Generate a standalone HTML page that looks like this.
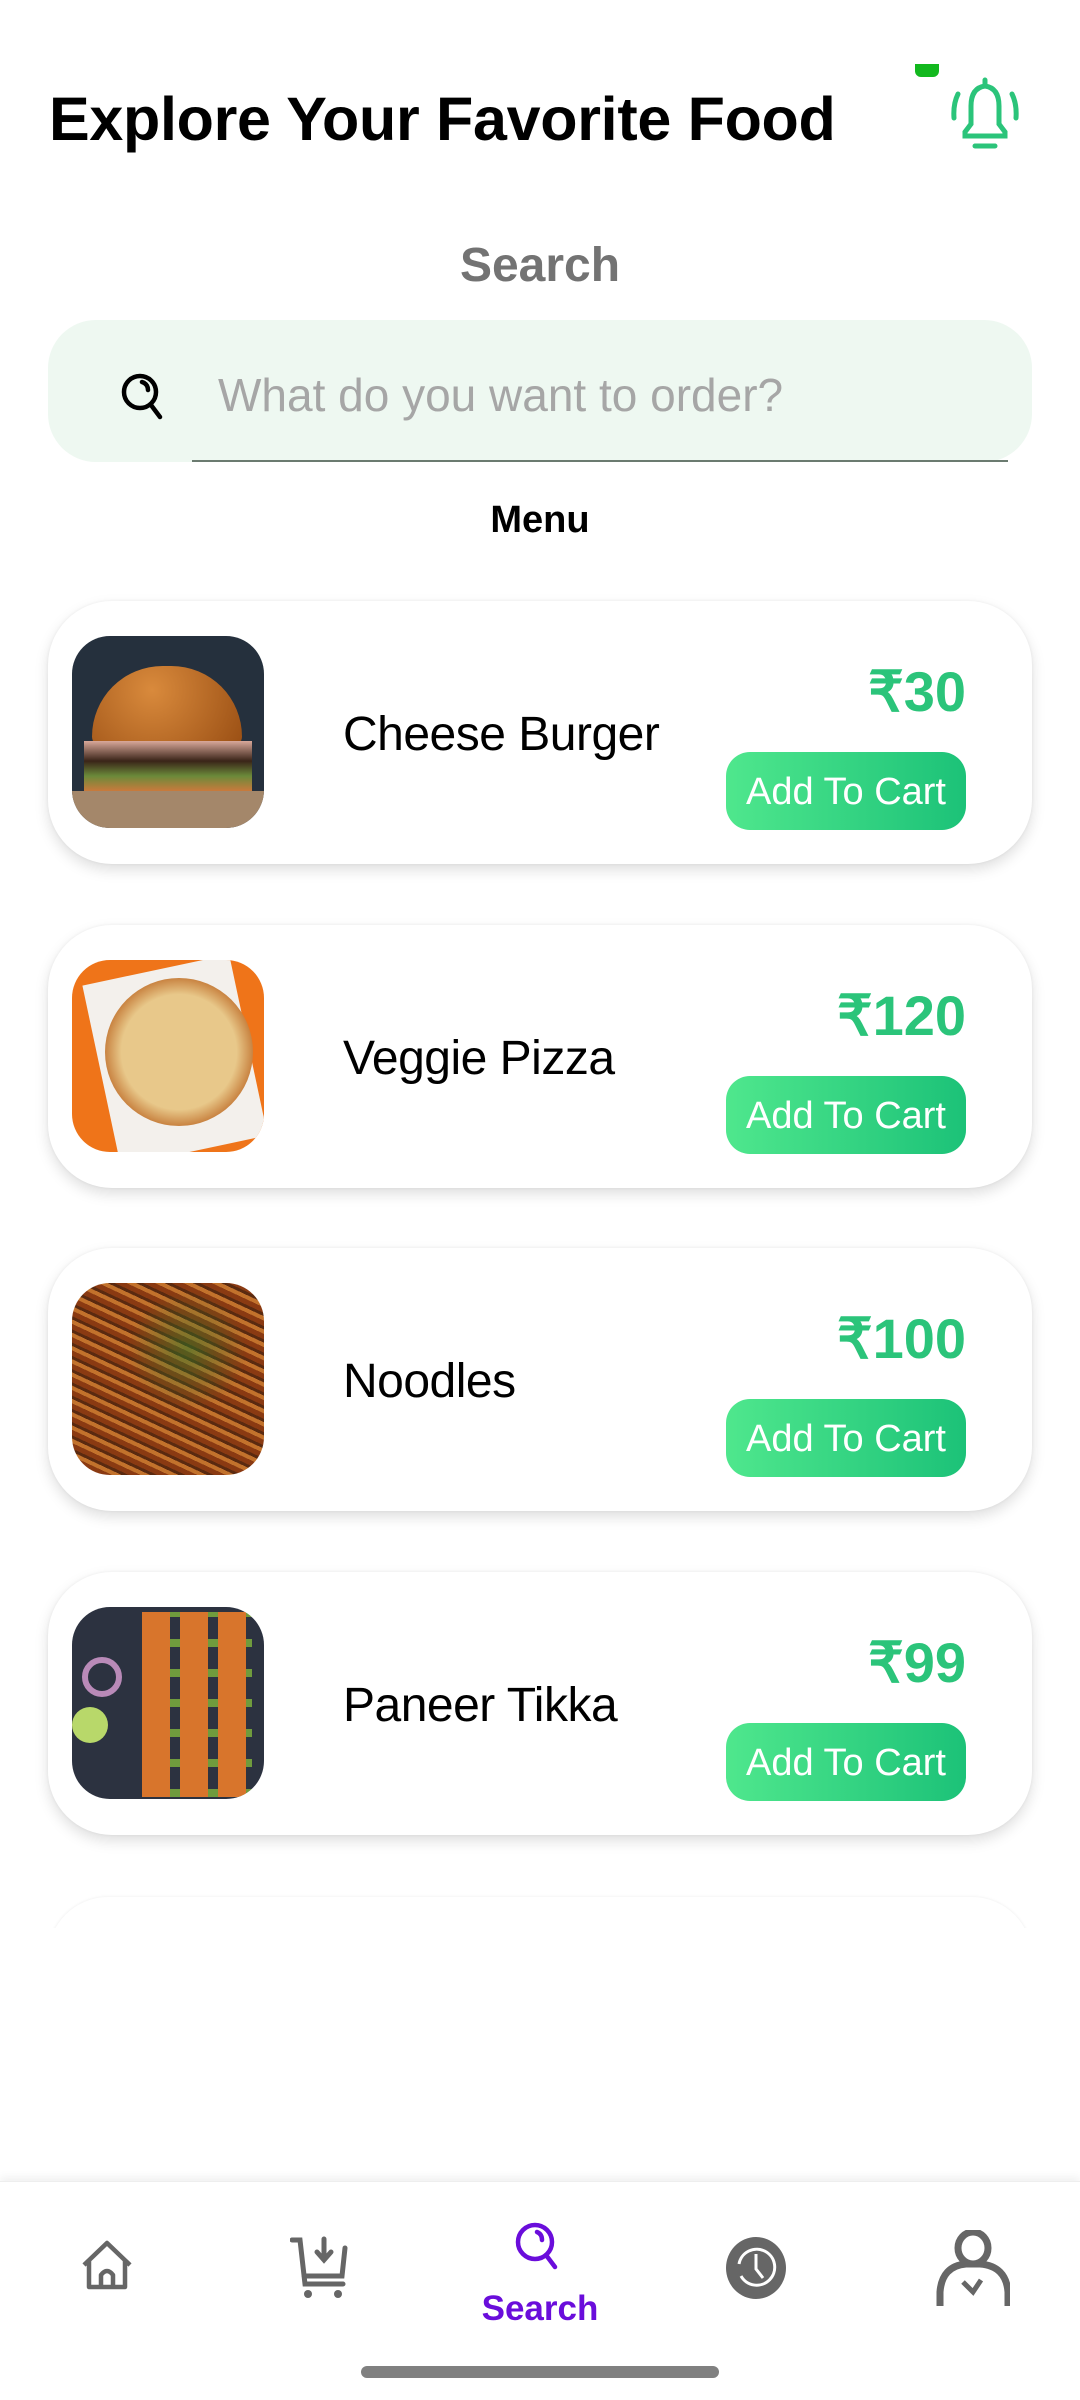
<!DOCTYPE html>
<html><head><meta charset="utf-8"><style>
*{margin:0;padding:0;box-sizing:border-box}
body{width:1080px;height:2400px;background:#fff;position:relative;overflow:hidden;font-family:"Liberation Sans",sans-serif}
.abs{position:absolute}
.title{left:49px;top:84px;font-size:61px;font-weight:bold;color:#000;letter-spacing:-0.3px}
.stitle{left:0;width:1080px;text-align:center;top:238px;font-size:48px;font-weight:bold;color:#737373}
.sbox{left:48px;top:320px;width:984px;height:142px;background:#eef8f1;border-radius:48px}
.sline{left:192px;top:460px;width:816px;height:2px;background:#6b7b70}
.ph{left:218px;top:368px;font-size:46px;color:#a6a6a6}
.menu{left:0;width:1080px;text-align:center;top:499px;font-size:38px;font-weight:bold;color:#000}
.card{left:48px;width:984px;height:263px;background:#fff;border-radius:64px;box-shadow:0 6px 14px rgba(0,0,0,.13),0 0 3px rgba(0,0,0,.06)}
.img{position:absolute;left:24px;top:35px;width:192px;height:192px;border-radius:38px;overflow:hidden}
.name{position:absolute;left:295px;top:106px;font-size:48px;color:#000;letter-spacing:-0.5px}
.price{position:absolute;right:66px;top:58px;font-size:56px;font-weight:bold;color:#2bc47a}
.btn{position:absolute;left:678px;top:151px;width:240px;height:78px;border-radius:24px;background:linear-gradient(90deg,#4fe78d,#1cc278);color:#fff;font-size:38px;text-align:center;line-height:80px}
.nav{left:0;top:2181px;width:1080px;height:219px;background:#fff;box-shadow:0 -4px 8px rgba(0,0,0,.06);border-top:1px solid #eee}
</style></head><body>
<div class="abs title">Explore Your Favorite Food</div>
<div class="abs" style="left:915px;top:64px;width:24px;height:13px;background:#12b81e;border-radius:0 0 6px 6px"></div>
<svg class="abs" style="left:948px;top:74px" width="74" height="78" viewBox="0 0 74 78" fill="none" stroke="#2bc47a" stroke-width="5" stroke-linecap="round">
<path d="M37 6v5M23 50V32q0-18 14-20q14 2 14 20v18l6 8v4H17v-4z"/><path d="M27 72h20"/><path d="M10 20q-5 10-4 24M64 20q5 10 4 24"/></svg>
<div class="abs stitle">Search</div>
<div class="abs sbox"></div>
<div class="abs sline"></div>
<svg class="abs" style="left:120px;top:370px" width="48" height="52" viewBox="0 0 48 52" fill="none" stroke="#000" stroke-width="4.5" stroke-linecap="round"><circle cx="20" cy="22" r="16"/><path d="M31 35l9 12M22 12q6 2 6 8"/></svg>
<div class="abs ph">What do you want to order?</div>
<div class="abs menu">Menu</div>

<div class="abs card" style="top:601px">
<div class="img" style="background:#25303d"><div style="position:absolute;left:20px;top:30px;width:150px;height:80px;border-radius:75px 75px 10px 10px;background:radial-gradient(circle at 40% 30%,#d98a3c,#9a4f14)"></div><div style="position:absolute;left:12px;top:105px;width:168px;height:50px;background:linear-gradient(#d9a89a,#3a2418 40%,#6b8a3a 70%,#c97a3c)"></div><div style="position:absolute;left:0;top:155px;width:192px;height:37px;background:#a4876a"></div></div>
<div class="name">Cheese Burger</div><div class="price">₹30</div><div class="btn">Add To Cart</div></div>

<div class="abs card" style="top:925px">
<div class="img" style="background:#ef7419"><div style="position:absolute;left:28px;top:8px;width:150px;height:185px;background:#f3f0ec;transform:rotate(-12deg)"></div><div style="position:absolute;left:33px;top:18px;width:148px;height:148px;border-radius:50%;background:radial-gradient(circle,#e8c88a 55%,#c0702d 75%,#b56a2a)"></div></div>
<div class="name">Veggie Pizza</div><div class="price">₹120</div><div class="btn">Add To Cart</div></div>

<div class="abs card" style="top:1248px">
<div class="img" style="background:repeating-linear-gradient(25deg,#8a3a12 0 5px,#c2722c 5px 9px,#5a2a10 9px 12px)"><div style="position:absolute;inset:0;background:radial-gradient(circle at 60% 35%,rgba(40,120,40,.55),transparent 35%)"></div></div>
<div class="name">Noodles</div><div class="price">₹100</div><div class="btn">Add To Cart</div></div>

<div class="abs card" style="top:1572px">
<div class="img" style="background:#2c3240"><div style="position:absolute;left:70px;top:5px;width:110px;height:185px;background:repeating-linear-gradient(90deg,#d8752c 0 28px,transparent 28px 38px),repeating-linear-gradient(0deg,rgba(140,200,60,.7) 0 8px,transparent 8px 30px)"></div><div style="position:absolute;left:10px;top:50px;width:40px;height:40px;border-radius:50%;border:6px solid #b98ab8"></div><div style="position:absolute;left:0;top:100px;width:36px;height:36px;border-radius:50%;background:#b8d86a"></div></div>
<div class="name">Paneer Tikka</div><div class="price">₹99</div><div class="btn">Add To Cart</div></div>

<div class="abs card" style="top:1897px;height:120px;box-shadow:0 0 3px rgba(0,0,0,.08)"></div>
<div class="abs" style="left:0;top:1928px;width:1080px;height:260px;background:#fff"></div>

<div class="abs nav"></div>
<svg class="abs" style="left:79px;top:2237px" width="56" height="56" viewBox="0 0 56 56" fill="none" stroke="#666" stroke-width="4.5" stroke-linejoin="round"><path d="M5 28L28 6l23 22M10 24v26h36V24"/><path d="M22 50V38q6-8 12 0v12"/></svg>
<svg class="abs" style="left:290px;top:2236px" width="66" height="66" viewBox="0 0 66 66" fill="#666" stroke="#666" stroke-width="5" stroke-linecap="round"><path fill="none" d="M2 4h8l5 44h38M55 12l-3 28H14"/><path fill="none" d="M34 3v20M27 16l7 8 7-8"/><circle cx="18" cy="58" r="4" stroke="none"/><circle cx="48" cy="58" r="4" stroke="none"/></svg>
<svg class="abs" style="left:515px;top:2222px" width="48" height="50" viewBox="0 0 48 50" fill="none" stroke="#6a0ddb" stroke-width="4.5" stroke-linecap="round"><circle cx="20" cy="20" r="17"/><path d="M31 33l9 12M22 10q5 2 5 8"/></svg>
<div class="abs" style="left:0;width:1080px;text-align:center;top:2289px;font-size:35px;font-weight:bold;color:#6a0ddb">Search</div>
<svg class="abs" style="left:725px;top:2236px" width="62" height="64" viewBox="0 0 62 64"><ellipse cx="31" cy="32" rx="30" ry="31" fill="#666"/><path d="M14 28a18 18 0 1 1 2 12" fill="none" stroke="#fff" stroke-width="3"/><path d="M31 18v15l7 9" fill="none" stroke="#fff" stroke-width="3"/></svg>
<svg class="abs" style="left:936px;top:2230px" width="74" height="76" viewBox="0 0 74 76" fill="none" stroke="#666" stroke-width="7"><ellipse cx="37" cy="18" rx="15" ry="16"/><path d="M4 76V62q2-26 26-28h14q26 2 28 28v14"/><path d="M27 52l10 10 8-12" stroke-width="5"/></svg>
<div class="abs" style="left:361px;top:2366px;width:358px;height:12px;border-radius:6px;background:#808080"></div>
</body></html>
